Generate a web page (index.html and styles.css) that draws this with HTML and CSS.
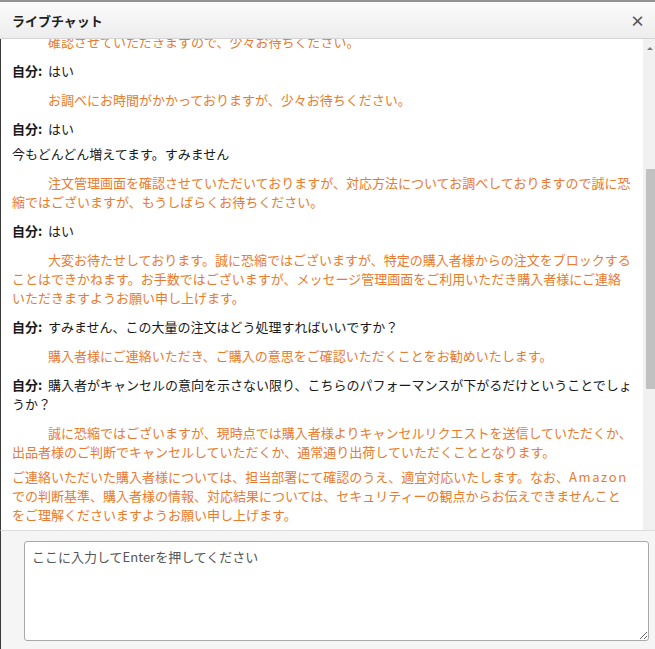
FILE: index.html
```html
<!DOCTYPE html>
<html lang="ja">
<head>
    <meta charset="UTF-8">
    <meta name="viewport" content="width=device-width, initial-scale=1.0">
    <title>ライブチャット</title>
    <link rel="stylesheet" href="styles.css">
</head>
<body>
    <div class="chat">
        <header class="chat-header">
            <span class="chat-title">ライブチャット</span>
            <span class="chat-close">×</span>
        </header>

        <div class="chat-body">
            <div class="log">
                <div class="msg agent">
                    <p class="first">確認させていただきますので、少々お待ちください。</p>
                </div>
                <div class="msg self"><span class="who">自分:</span>はい</div>
                <div class="msg agent">
                    <p class="first">お調べにお時間がかかっておりますが、少々お待ちください。</p>
                </div>
                <div class="msg self"><span class="who">自分:</span>はい</div>
                <div class="msg self cont">今もどんどん増えてます。すみません</div>
                <div class="msg agent">
                    <p class="first">注文管理画面を確認させていただいておりますが、対応方法についてお調べしておりますので誠に恐縮ではございますが、もうしばらくお待ちください。</p>
                </div>
                <div class="msg self"><span class="who">自分:</span>はい</div>
                <div class="msg agent">
                    <p class="first">大変お待たせしております。誠に恐縮ではございますが、特定の購入者様からの注文をブロックすることはできかねます。お手数ではございますが、メッセージ管理画面をご利用いただき購入者様にご連絡いただきますようお願い申し上げます。</p>
                </div>
                <div class="msg self"><span class="who">自分:</span>すみません、この大量の注文はどう処理すればいいですか？</div>
                <div class="msg agent">
                    <p class="first">購入者様にご連絡いただき、ご購入の意思をご確認いただくことをお勧めいたします。</p>
                </div>
                <div class="msg self"><span class="who">自分:</span>購入者がキャンセルの意向を示さない限り、こちらのパフォーマンスが下がるだけということでしょうか？</div>
                <div class="msg agent">
                    <p class="first">誠に恐縮ではございますが、現時点では購入者様よりキャンセルリクエストを送信していただくか、出品者様のご判断でキャンセルしていただくか、通常通り出荷していただくこととなります。</p>
                    <p class="next">ご連絡いただいた購入者様については、担当部署にて確認のうえ、適宜対応いたします。なお、<span class="latin">Amazon</span>での判断基準、購入者様の情報、対応結果については、セキュリティーの観点からお伝えできませんことをご理解くださいますようお願い申し上げます。</p>
                </div>
            </div>
            <div class="scrollbar">
                <span class="scroll-up"></span>
                <span class="scroll-thumb"></span>
            </div>
        </div>

        <footer class="chat-footer">
            <textarea class="chat-input" placeholder="ここに入力してEnterを押してください"></textarea>
        </footer>
    </div>
</body>
</html>
```

FILE: styles.css
```css
/* Reset */
* {
    margin: 0;
    padding: 0;
    box-sizing: border-box;
}

body {
    font-family: "Noto Sans CJK JP", "Noto Sans", sans-serif;
    font-size: 13px;
    color: #222;
    background: #fff;
}

/* Window */
.chat {
    display: flex;
    flex-direction: column;
    height: 100vh;
}

.chat-header {
    height: 39px;
    flex-shrink: 0;
    display: flex;
    align-items: center;
    justify-content: space-between;
    padding: 0 10px 0 12px;
    border-top: 2px solid #939393;
    border-bottom: 1px solid #d4d4d4;
    background: linear-gradient(#fbfbfb, #ededed);
}

.chat-title {
    font-size: 13px;
    font-weight: bold;
    color: #1e1e1e;
    line-height: 1;
}

.chat-close {
    font-size: 15px;
    font-weight: bold;
    color: #555;
    line-height: 1;
}

/* Message log */
.chat-body {
    flex: 1;
    min-height: 0;
    display: flex;
    border-left: 1px solid #3a3a3a;
}

.log {
    flex: 1;
    display: flex;
    flex-direction: column;
    justify-content: flex-end;
    overflow: hidden;
    padding: 0 10px 6px 11px;
    background: #fff;
}

.msg {
    line-height: 19px;
    margin-top: 10px;
    flex-shrink: 0;
}

.msg.cont {
    margin-top: 6px;
}

.self {
    color: #1a1a1a;
}

.who {
    display: inline-block;
    width: 36px;
    font-weight: bold;
}

.agent {
    color: #ea7a2d;
}

.agent .first {
    text-indent: 36px;
}

.agent .next {
    margin-top: 6px;
}

.latin {
    letter-spacing: 1.6px;
}

/* Scrollbar */
.scrollbar {
    width: 12px;
    flex-shrink: 0;
    background: #f1f1f1;
    display: flex;
    flex-direction: column;
    align-items: flex-end;
}

.scroll-up {
    width: 0;
    height: 0;
    margin: 8px 2px 0 0;
    border-left: 3px solid transparent;
    border-right: 3px solid transparent;
    border-bottom: 3px solid #7a7a7a;
}

.scroll-thumb {
    width: 9px;
    height: 220px;
    margin-top: 119px;
    background: #c1c1c1;
}

/* Input */
.chat-footer {
    height: 119px;
    flex-shrink: 0;
    padding: 10px 6px 8px 23px;
    border-top: 1px solid #dcdcdc;
    border-left: 1px solid #3a3a3a;
    background: #f5f5f5;
}

.chat-input {
    width: 100%;
    height: 100px;
    padding: 5px 7px;
    border: 1px solid #a9a9a9;
    border-radius: 3px;
    font-family: "Noto Sans CJK JP", "Noto Sans", sans-serif;
    font-size: 13px;
    line-height: 19px;
    color: #333;
    background: #fff;
}

.chat-input::placeholder {
    color: #555;
}
```
